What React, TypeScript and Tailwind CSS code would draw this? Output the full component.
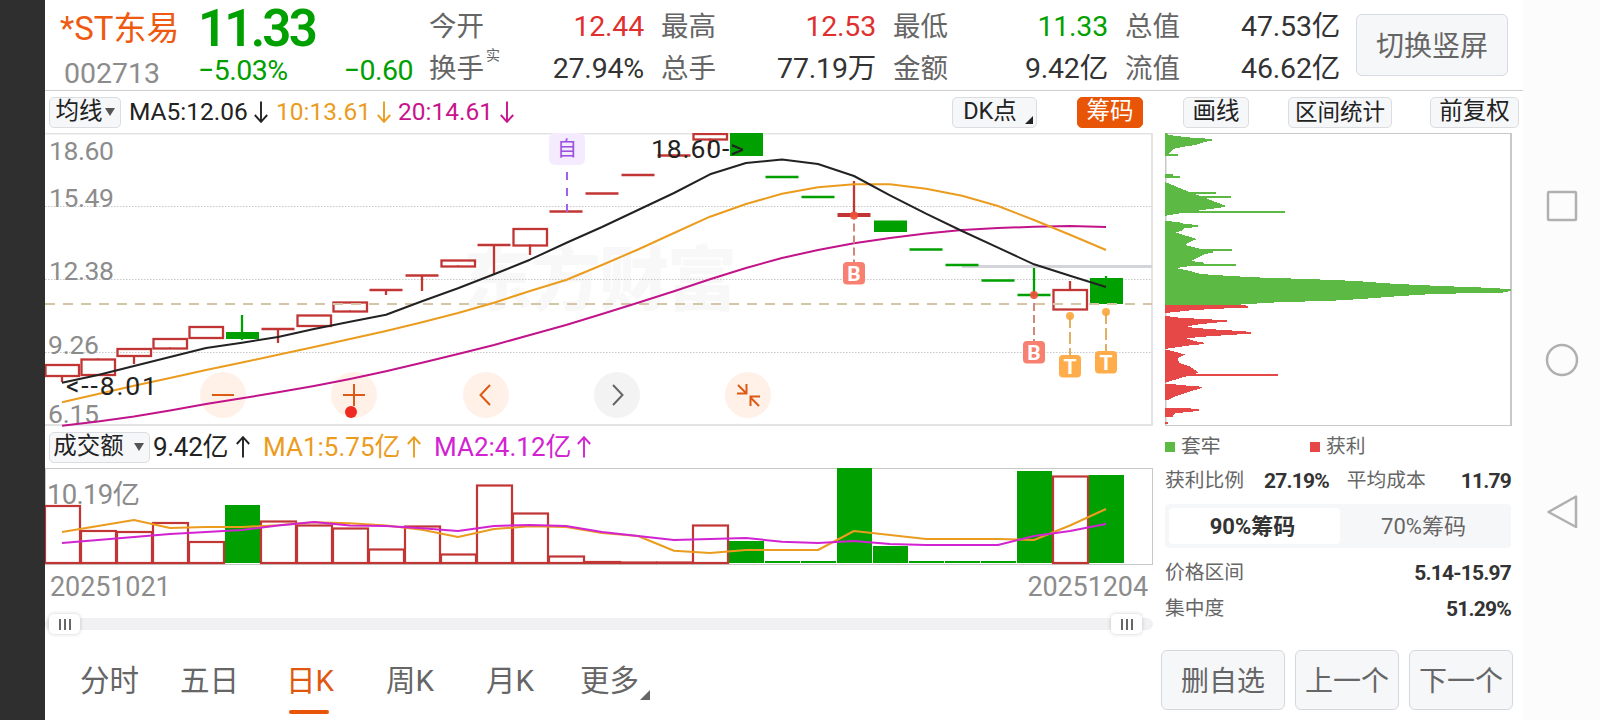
import React from 'react';
import clsx from 'clsx';

const UP = '#c23535';
const DOWN = '#00a000';

// centre x of a bar inside the chart area
const cx = (i: number) => 17 + i * 36;

interface Candle {
  type: 'hollow' | 'solid' | 'flat';
  up: boolean;
  top: number;
  bottom: number;
  high?: number;
  low?: number;
}

const hollow = (top: number, bottom: number, low?: number, high?: number): Candle => ({ type: 'hollow', up: true, top, bottom, low, high });
const solid = (top: number, bottom: number, low?: number, high?: number): Candle => ({ type: 'solid', up: false, top, bottom, low, high });
const flat = (y: number, up: boolean, low?: number, high?: number): Candle => ({ type: 'flat', up, top: y, bottom: y, low, high });

const candles: Candle[] = [
  hollow(231, 242, 249),
  hollow(225.5, 241, undefined, 225),
  hollow(215, 222, 231),
  hollow(205, 214.5, 216),
  hollow(193, 204),
  solid(199, 206, 207, 182),
  flat(196, true, 210),
  hollow(181.5, 192, 193.5),
  hollow(168.5, 177.5, 179),
  flat(157, true, 162),
  flat(142.5, true, 158),
  hollow(126.5, 132.5, 134),
  flat(112, true, 141),
  hollow(95, 111.5, 122),
  flat(78.5, true),
  flat(60.5, true),
  flat(42, true),
  flat(22.5, true),
  hollow(0, 5.5, 16),
  solid(0, 23),
  flat(44, false),
  flat(64, false),
  flat(82, true, undefined, 48),
  solid(87.5, 99),
  flat(116.5, false),
  flat(132, false),
  flat(147.5, false),
  flat(162, false, undefined, 135),
  hollow(156, 175.5, undefined, 148),
  solid(145, 171, undefined, 143),
];

const ma5 = [249.7, 242, 233, 224, 215, 209.7, 204, 196, 188.7, 181.7, 168.3, 155.3, 141.3, 126.7, 110, 94, 77, 60, 41.3, 30, 26.5, 31, 43, 62.3, 80.7, 98, 114.7, 131.3, 142.7, 154];
const ma10 = [269.3, 261, 252.7, 245, 237, 229.5, 221.7, 214, 206, 198, 189.3, 180, 169.7, 158, 147, 132, 116.5, 100, 83.7, 71, 60.7, 54.3, 51.3, 51.3, 55.7, 62.7, 73, 87, 101.7, 117];
const ma20 = [292.7, 288.5, 283.5, 277.5, 271, 265.3, 259.3, 253, 246, 238.2, 229.7, 221, 212, 202, 192, 181, 169.7, 158.3, 146.3, 135, 125, 117, 110.3, 105, 100.5, 97, 95, 93.8, 93, 94];

const volumes = [505, 530, 531, 522, 541, 505, 520.5, 524.5, 527.5, 548.5, 525.5, 553.5, 484.5, 512.5, 555.5, 561, 561.5, 561.5, 524.5, 541, 561, 561, 468, 546, 561, 561, 561, 471, 475.5, 475].map((y) => y - 468);
const greenVolumes = [5, 19, 20, 21, 22, 23, 24, 25, 26, 27, 29];
const volMa1 = [532, 526, 520, 528, 527, 527, 525.3, 522.3, 523.3, 525.5, 529.7, 537, 529, 526.3, 527, 533, 536, 550.7, 553, 550, 550, 550, 531, 535, 539, 539, 539, 540, 525.5, 509].map((y) => y - 468);
const volMa2 = [543, 540, 537, 534, 532, 530, 525.5, 522, 525.5, 526, 528.3, 531, 526, 525, 526, 532, 536, 540, 539, 538, 541.7, 543, 541, 544, 545, 545, 545, 536, 531, 524].map((y) => y - 468);

const toPoints = (ys: number[]) => ys.map((y, i) => `${cx(i)},${y}`).join(' ');

// chip distribution: [y, width]
const trapped: number[][][] = [
  [[0, 1], [2, 3], [3, 13], [4, 18], [6, 47], [7.5, 47], [9, 40], [12, 30], [13.5, 20], [16, 8], [18, 6], [21, 3]],
  [[49, 0], [60, 27], [72.5, 60], [74, 60], [76, 45], [78, 30], [80, 17], [82.5, 2]],
  [[88, 0], [89, 13], [91, 20], [92, 33], [94, 33], [95, 20], [97.5, 17], [99.5, 11], [103, 22], [106, 32], [109, 25], [112, 20], [114, 28], [116, 36], [119, 50], [121, 40], [125, 32], [128, 26], [130, 42], [133, 25], [135, 11], [138, 25], [141, 36], [142.6, 59], [144.3, 89], [146.3, 150], [148, 192], [150.3, 221], [151.7, 248], [153, 275], [155, 330], [156.5, 346], [158, 346], [159.5, 338], [161, 268], [163.3, 232], [166, 196], [167.7, 168], [169.3, 112], [171, 84], [171.5, 76]],
];
const trappedSpikes = [[21.5, 13], [41.5, 8], [44, 15], [60.3, 51], [63.7, 66], [79, 120], [116.7, 67], [131.7, 71]];
const profit: number[][][] = [
  [[171.5, 76], [173, 83], [174.7, 83], [175.7, 54], [177, 29], [179, 10], [180, 0]],
  [[183, 2], [184.3, 10], [185.7, 32], [187.3, 62], [188.7, 62], [190, 46], [192, 29], [194, 21], [196, 43], [198, 75], [199, 86], [200.5, 86], [201.5, 72], [203.3, 43], [205.3, 21], [208, 29], [209.7, 39], [211, 39], [212.3, 25], [214.3, 11], [216, 0]],
  [[217, 3], [219.3, 12], [221.5, 20], [225, 13], [230, 14], [233, 24], [237, 30], [240, 33], [243.7, 20], [247, 9], [249.7, 0]],
  [[250.7, 3], [252.3, 18], [253.7, 37], [255, 37], [257, 30], [260, 20], [264, 9], [267, 3]],
  [[275, 17], [276, 34], [277.7, 34], [279, 25], [280, 10], [283, 8]],
];
const profitSpikes = [[241.7, 113], [282.7, 8], [289.5, 3]];

const areaPath = (points: number[][]) =>
  `M0 ${points[0][0]}${points.map(([y, w]) => `L${w} ${y}`).join('')}L0 ${points[points.length - 1][0]}Z`;

const stats = [
  [{ label: '今开', value: '12.44', color: 'text-[#e02f2f]' }, { label: '换手', value: '27.94%', note: '实' }],
  [{ label: '最高', value: '12.53', color: 'text-[#e02f2f]' }, { label: '总手', value: '77.19万' }],
  [{ label: '最低', value: '11.33', color: 'text-[#00a000]' }, { label: '金额', value: '9.42亿' }],
  [{ label: '总值', value: '47.53亿' }, { label: '流值', value: '46.62亿' }],
];

function Header() {
  return (
    <header className="flex h-[91px] shrink-0 border-b border-[#cfcfcf] leading-none">
      <div className="w-[153px] pl-[15px]">
        <div className="flex h-[55px] items-center pt-[2px] text-[33px] text-[#ee5a12]">*ST东易</div>
        <div className="flex h-[36px] items-center pt-[2px] pl-[4px] text-[28.5px] text-[#8c8c8c]">002713</div>
      </div>
      <div className="w-[215px]">
        <div className="flex h-[54px] items-center pt-[2px] text-[51px] font-semibold tracking-[-2.8px] text-[#00a000]">11.33</div>
        <div className="flex h-[34px] items-center justify-between pt-px text-[28.5px] tracking-[-0.5px] text-[#00a000]">
          <span>−5.03%</span>
          <span>−0.60</span>
        </div>
      </div>
      <div className="flex gap-[18px] pl-[16px]">
        {stats.map((col, i) => (
          <div key={i} className="flex w-[214px] flex-col pt-[6px] text-[28.5px]">
            {col.map((s) => (
              <div key={s.label} className="flex h-[42px] items-center justify-between">
                <span className="flex text-[27.5px] text-[#666]">
                  {s.label}
                  {s.note && <sup className="ml-[2px] text-[14px] leading-none">{s.note}</sup>}
                </span>
                <span className={clsx('-mr-px tracking-[-0.2px]', s.color || 'text-[#333]')}>{s.value}</span>
              </div>
            ))}
          </div>
        ))}
      </div>
      <button className="mt-[14px] ml-[17px] h-[62px] w-[152px] rounded-md border border-[#d8dae4] bg-[#f6f7f9] pt-[4px] text-[28px] text-[#666]">
        切换竖屏
      </button>
    </header>
  );
}

function Chip({ className, active, children }: { className?: string; active?: boolean; children: React.ReactNode }) {
  return (
    <button
      className={clsx(
        'flex h-[31px] items-center justify-center rounded-[5px] border',
        active ? 'border-[#e95506] bg-[#e95506] text-white' : 'border-[#dcdde1] bg-[#f6f7f9] text-[#222]',
        className || 'text-[23.5px]',
      )}
    >
      {children}
    </button>
  );
}

function Caret() {
  return <svg className="h-[8px] w-[10px] shrink-0" viewBox="0 0 10 8"><path d="M0 0h10L5 8z" fill="#555" /></svg>;
}

function Arrow({ up }: { up?: boolean }) {
  return (
    <svg className={clsx('h-[22px] w-[14px] shrink-0', up && 'rotate-180')} viewBox="0 0 14 22" fill="none" stroke="currentColor" strokeWidth="1.9">
      <path d="M7 0.500v20.500M0.800 14l6.200 6.800 6.200-6.800" />
    </svg>
  );
}

function Toolbar() {
  return (
    <div className="flex h-[42px] shrink-0 items-center leading-none">
      <Chip className="ml-[4px] w-[72px] gap-[2px] text-[23.5px]">均线<Caret /></Chip>
      <div className="ml-[8px] flex w-[147px] items-center text-[24.5px] text-[#222]"><span className="w-[125px]">MA5:12.06</span><Arrow /></div>
      <div className="flex w-[122px] items-center text-[24.5px] text-[#eb9c1e]"><span className="w-[101px]">10:13.61</span><Arrow /></div>
      <div className="flex w-[120px] items-center text-[24.5px] text-[#c8148c]"><span className="w-[102px]">20:14.61</span><Arrow /></div>
      <Chip className="relative ml-auto w-[85px] pr-[9px] text-[23.5px]">
        DK点
        <svg className="absolute right-[3px] bottom-[3px] h-[8px] w-[8px]" viewBox="0 0 8 8"><path d="M8 0v8H0z" fill="#222" /></svg>
      </Chip>
      <Chip active className="ml-[40px] w-[66px] text-[23.5px]">筹码</Chip>
      <Chip className="ml-[40px] w-[66px] text-[23.5px]">画线</Chip>
      <Chip className="ml-[39px] w-[104px] text-[22.5px]">区间统计</Chip>
      <Chip className="mr-[4px] ml-[38px] w-[89px] text-[23.5px]">前复权</Chip>
    </div>
  );
}

function Marker({ i, from, box, letter }: { i: number; from: number; box: number; letter: 'B' | 'T' }) {
  const x = cx(i);
  const isBuy = letter === 'B';
  return (
    <g>
      <line x1={x} x2={x} y1={from} y2={box} stroke={isBuy ? '#d08878' : '#e0b060'} strokeWidth="2" strokeDasharray={isBuy ? '8 4' : '12 4'} strokeDashoffset={isBuy ? 4 : 0} />
      <circle cx={x} cy={from} r="4" fill={isBuy ? '#ee5038' : '#faa53c'} fillOpacity="0.9" />
      <rect x={x - 11} y={box} width="22" height="22.5" rx="4" fill={isBuy ? '#f78070' : '#ffad4a'} />
      <text x={x} y={box + 18.5} textAnchor="middle" fontSize="21" fontWeight="700" fill="#fff">{letter}</text>
    </g>
  );
}

function PriceChart() {
  return (
    <svg className="block h-[294px] w-[1108px] shrink-0" viewBox="0 0 1108 294">
      <g fontSize="70" fontWeight="900" fill="#f8f8f8">
        <text x="418" y="172" textLength="274">东方财富</text>
      </g>
      <g fill="#fff0e8">
        <circle cx="178" cy="262" r="23" />
        <circle cx="309" cy="262" r="23" />
        <circle cx="441" cy="262" r="23" />
        <circle cx="572" cy="262" r="23" fill="#f3f3f3" />
        <circle cx="703" cy="262" r="23" />
      </g>
      <g stroke="#c8c8c8" strokeDasharray="1.5 1.5">
        <line x1="0" x2="1107" y1="73.5" y2="73.5" />
        <line x1="0" x2="1107" y1="146.5" y2="146.5" />
        <line x1="0" x2="1107" y1="219.5" y2="219.5" />
      </g>
      <path d="M0 0.5H1107V292H0" fill="none" stroke="#e3e3e3" strokeWidth="2" />
      <g fontSize="26.5" fill="#8c8c8c">
        <text x="4" y="26.5" textLength="65">18.60</text>
        <text x="4" y="73.5" textLength="65">15.49</text>
        <text x="4" y="146.5" textLength="65">12.38</text>
        <text x="3" y="221" textLength="51">9.26</text>
        <text x="3" y="289.5" textLength="51">6.15</text>
      </g>
      <line x1="917" x2="1107" y1="133.5" y2="133.5" stroke="#d2d4d9" strokeWidth="3" />
      {candles.map((c, i) => {
        const color = c.up ? UP : DOWN;
        const x = cx(i);
        return (
          <g key={i} stroke={color} strokeWidth="2.3">
            {c.high !== undefined && <line x1={x} x2={x} y1={c.high} y2={c.top} />}
            {c.low !== undefined && <line x1={x} x2={x} y1={c.bottom} y2={c.low} />}
            {c.type === 'hollow' && <rect x={x - 16.5} y={c.top + 1} width="33.5" height={c.bottom - c.top} fill="none" />}
            {c.type === 'solid' && <rect x={x - 16} y={c.top} width="33" height={c.bottom - c.top} fill={color} stroke="none" />}
            {c.type === 'flat' && <line x1={x - 16.5} x2={x + 16.5} y1={c.top} y2={c.top} strokeWidth={i === 22 ? 4 : 2.4} />}
          </g>
        );
      })}
      <line x1="0" x2="1107" y1="171" y2="171" stroke="#d6c6a8" strokeWidth="1.8" strokeDasharray="10 8" />
      <g fill="none" strokeWidth="2" strokeLinejoin="round">
        <polyline points={toPoints(ma20)} stroke="#c2148a" />
        <polyline points={toPoints(ma10)} stroke="#eb9c1e" />
        <polyline points={toPoints(ma5)} stroke="#222" />
      </g>
      <line x1="522" x2="522" y1="39" y2="79" stroke="#a55fe6" strokeWidth="2" strokeDasharray="8 8" />
      <rect x="504" y="0" width="36" height="32" rx="6" fill="#f5ebff" />
      <text x="522" y="23" textAnchor="middle" fontSize="20" fill="#9a4fe0">自</text>
      <Marker i={22} from={82.5} box={129} letter="B" />
      <Marker i={27} from={162} box={208} letter="B" />
      <Marker i={28} from={183} box={222} letter="T" />
      <Marker i={29} from={179} box={218} letter="T" />
      <g fontSize="26.5" fill="#222">
        <text x="606" y="25" textLength="93">18.60-&gt;</text>
        <text x="21" y="262" textLength="91">&lt;--8.01</text>
      </g>
      <g fill="none" stroke="#dc5a14" strokeWidth="2">
        <path d="M167 262h22M298 262h22M309 251v22M445 252l-9.5 10 9.5 10" />
        <path d="M568 252l9.5 10-9.5 10" stroke="#666" />
        <path d="M693 252l8 8M701.5 251v9.5h-9.5M714 273l-8-8M705.5 273v-9.5h9.5" />
      </g>
      <circle cx="306" cy="279" r="6" fill="#ee2a22" />
    </svg>
  );
}

function VolumeChart() {
  return (
    <svg className="block h-[97px] w-[1108px] shrink-0" viewBox="0 0 1108 97">
      <rect x="0.5" y="0.5" width="1107" height="96" fill="none" stroke="#c8c8c8" />
      <text x="2" y="36" fontSize="27.5" fill="#8c8c8c" textLength="93">10.19亿</text>
      {volumes.map((y, i) =>
        greenVolumes.includes(i) ? (
          <rect key={i} x={cx(i) - 17} y={y} width="35" height={95 - y} fill={DOWN} />
        ) : (
          <rect key={i} x={cx(i) - 17} y={y + 1} width="35" height={94 - y} fill="none" stroke={UP} strokeWidth="2.2" />
        ),
      )}
      <g fill="none" strokeWidth="2" strokeLinejoin="round">
        <polyline points={toPoints(volMa1)} stroke="#eb9c1e" />
        <polyline points={toPoints(volMa2)} stroke="#d223d2" />
      </g>
    </svg>
  );
}

function Handle() {
  return (
    <div className="flex h-[20px] w-[31px] items-center justify-center gap-[3px] rounded-[5px] bg-white shadow-[0_0_4px_rgba(0,0,0,0.2)]">
      <i className="h-[11px] w-[2px] bg-[#666]" />
      <i className="h-[11px] w-[2px] bg-[#666]" />
      <i className="h-[11px] w-[2px] bg-[#666]" />
    </div>
  );
}

const tabs = ['分时', '五日', '日K', '周K', '月K', '更多'];

function Tabs() {
  return (
    <nav className="mt-[26px] flex h-[60px] pl-[35px] text-[29.5px] leading-none text-[#666]">
      {tabs.map((t) => (
        <div key={t} className={clsx('flex w-[100px] flex-col', t === '日K' && 'pl-[6px] text-[#e0580f]', t === '周K' && 'pl-[6px]', t === '月K' && 'pl-[6px]')}>
          <div className="flex h-[49px] items-center pt-[3px]">
            {t}
            {t === '更多' && <svg className="mt-[25px] ml-px h-[10px] w-[10px]" viewBox="0 0 10 10"><path d="M10 0v10H0z" fill="#666" /></svg>}
          </div>
          {t === '日K' && <div className="mt-[5px] ml-[3px] h-[4px] w-[40px] rounded-full bg-[#e95506]" />}
        </div>
      ))}
    </nav>
  );
}

function ChipDistribution() {
  return (
    <svg className="block h-[294px] w-[348px] shrink-0" viewBox="0 0 348 294">
      <path d="M0 0.5H346" stroke="#c8c8c8" />
      <path d="M0 292.5H346" stroke="#c8c8c8" />
      <path d="M0.5 0V293M346 0V293" stroke="#c8c8c8" strokeWidth="2" />
      <g fill="#5bb944" shapeRendering="crispEdges">
        {trapped.map((p, i) => <path key={i} d={areaPath(p)} />)}
        {trappedSpikes.map(([y, w]) => <rect key={y} x="0" y={y - 1} width={w} height="2" />)}
      </g>
      <g fill="#e64848" shapeRendering="crispEdges">
        {profit.map((p, i) => <path key={i} d={areaPath(p)} />)}
        {profitSpikes.map(([y, w]) => <rect key={y} x="0" y={y - 1} width={w} height="2" />)}
      </g>
    </svg>
  );
}

function Figure({ children }: { children: React.ReactNode }) {
  return <b className="text-[21px] tracking-[-0.8px] text-[#333]">{children}</b>;
}

function ChipPanel() {
  return (
    <aside className="flex w-[352px] flex-col leading-none">
      <div className="pl-[4px] text-[19.8px] text-[#666]">
        <ChipDistribution />
        <div className="flex h-[40px] items-center">
          <i className="h-[10px] w-[10px] bg-[#5bb944]" />
          <span className="ml-[6px] w-[129px]">套牢</span>
          <i className="h-[10px] w-[10px] bg-[#e64848]" />
          <span className="ml-[6px]">获利</span>
        </div>
        <div className="flex h-[28px] w-[346px] items-center">
          <span className="w-[99px]">获利比例</span>
          <Figure>27.19%</Figure>
          <span className="ml-auto w-[114px]">平均成本</span>
          <Figure>11.79</Figure>
        </div>
        <div className="mt-[9px] flex h-[44px] w-[346px] rounded bg-[#f6f7f9] p-[4px] text-[22px]">
          <div className="flex flex-1 items-center justify-center rounded-sm bg-white pt-px pr-[4px] font-bold text-[#333]">90%筹码</div>
          <div className="flex flex-1 items-center justify-center pt-px">70%筹码</div>
        </div>
        <div className="mt-[7px] flex h-[36px] w-[346px] items-center justify-between">
          <span>价格区间</span>
          <Figure>5.14-15.97</Figure>
        </div>
        <div className="flex h-[36px] w-[346px] items-center justify-between">
          <span>集中度</span>
          <Figure>51.29%</Figure>
        </div>
      </div>
      <div className="mt-[23px] flex gap-[10px] text-[28px] text-[#666]">
        <button className="h-[60px] w-[124px] rounded-md border border-[#d5d7dd] bg-[#f6f7f9] pt-[3px]">删自选</button>
        <button className="h-[60px] w-[104px] rounded-md border border-[#d5d7dd] bg-[#f6f7f9] pt-[3px]">上一个</button>
        <button className="h-[60px] w-[104px] rounded-md border border-[#d5d7dd] bg-[#f6f7f9] pt-[3px]">下一个</button>
      </div>
    </aside>
  );
}

export default function App() {
  return (
    <div className="flex h-[720px] w-[1600px] overflow-hidden bg-white font-[Roboto,'Noto_Sans_CJK_SC',sans-serif] whitespace-nowrap">
      <div className="w-[45px] shrink-0 bg-[#2f2f2f]" />
      <main className="flex w-[1478px] shrink-0 flex-col">
        <Header />
        <Toolbar />
        <div className="flex">
          <section className="flex w-[1108px] shrink-0 flex-col">
            <PriceChart />
            <div className="flex h-[41px] shrink-0 items-center pb-px text-[26px] leading-none">
              <Chip className="ml-[4px] w-[101px] gap-[10px] pr-[2px] text-[23.5px]">成交额<Caret /></Chip>
              <div className="ml-[3px] flex w-[110px] items-center text-[#222]"><span className="w-[83px] tracking-[-0.3px]">9.42亿</span><Arrow up /></div>
              <div className="flex w-[171px] items-center text-[#eb9c1e]"><span className="w-[144px]">MA1:5.75亿</span><Arrow up /></div>
              <div className="flex items-center text-[#d223d2]"><span className="w-[143px]">MA2:4.12亿</span><Arrow up /></div>
            </div>
            <VolumeChart />
            <div className="flex h-[43px] items-center justify-between px-[5px] pt-[2px] text-[27px] leading-none tracking-[-0.1px] text-[#8c8c8c]">
              <span>20251021</span>
              <span>20251204</span>
            </div>
            <div className="mt-[10px] flex h-[12px] items-center justify-between rounded-full bg-[#f1f1f3] pr-[11px] pl-[4px]">
              <Handle />
              <Handle />
            </div>
            <Tabs />
          </section>
          <div className="w-[8px]" />
          <ChipPanel />
        </div>
      </main>
      <div className="flex flex-1 flex-col items-center bg-[#fcfcfc]">
        <svg className="mt-[190px] h-[340px] w-[34px]" viewBox="0 0 34 340" fill="none" stroke="#b0b0b0" strokeWidth="2.5" strokeLinejoin="round">
          <rect x="3" y="2" width="28" height="28" rx="1" />
          <circle cx="17" cy="170" r="15" />
          <path d="M31 306.5v30.5L3.5 322z" />
        </svg>
      </div>
    </div>
  );
}
